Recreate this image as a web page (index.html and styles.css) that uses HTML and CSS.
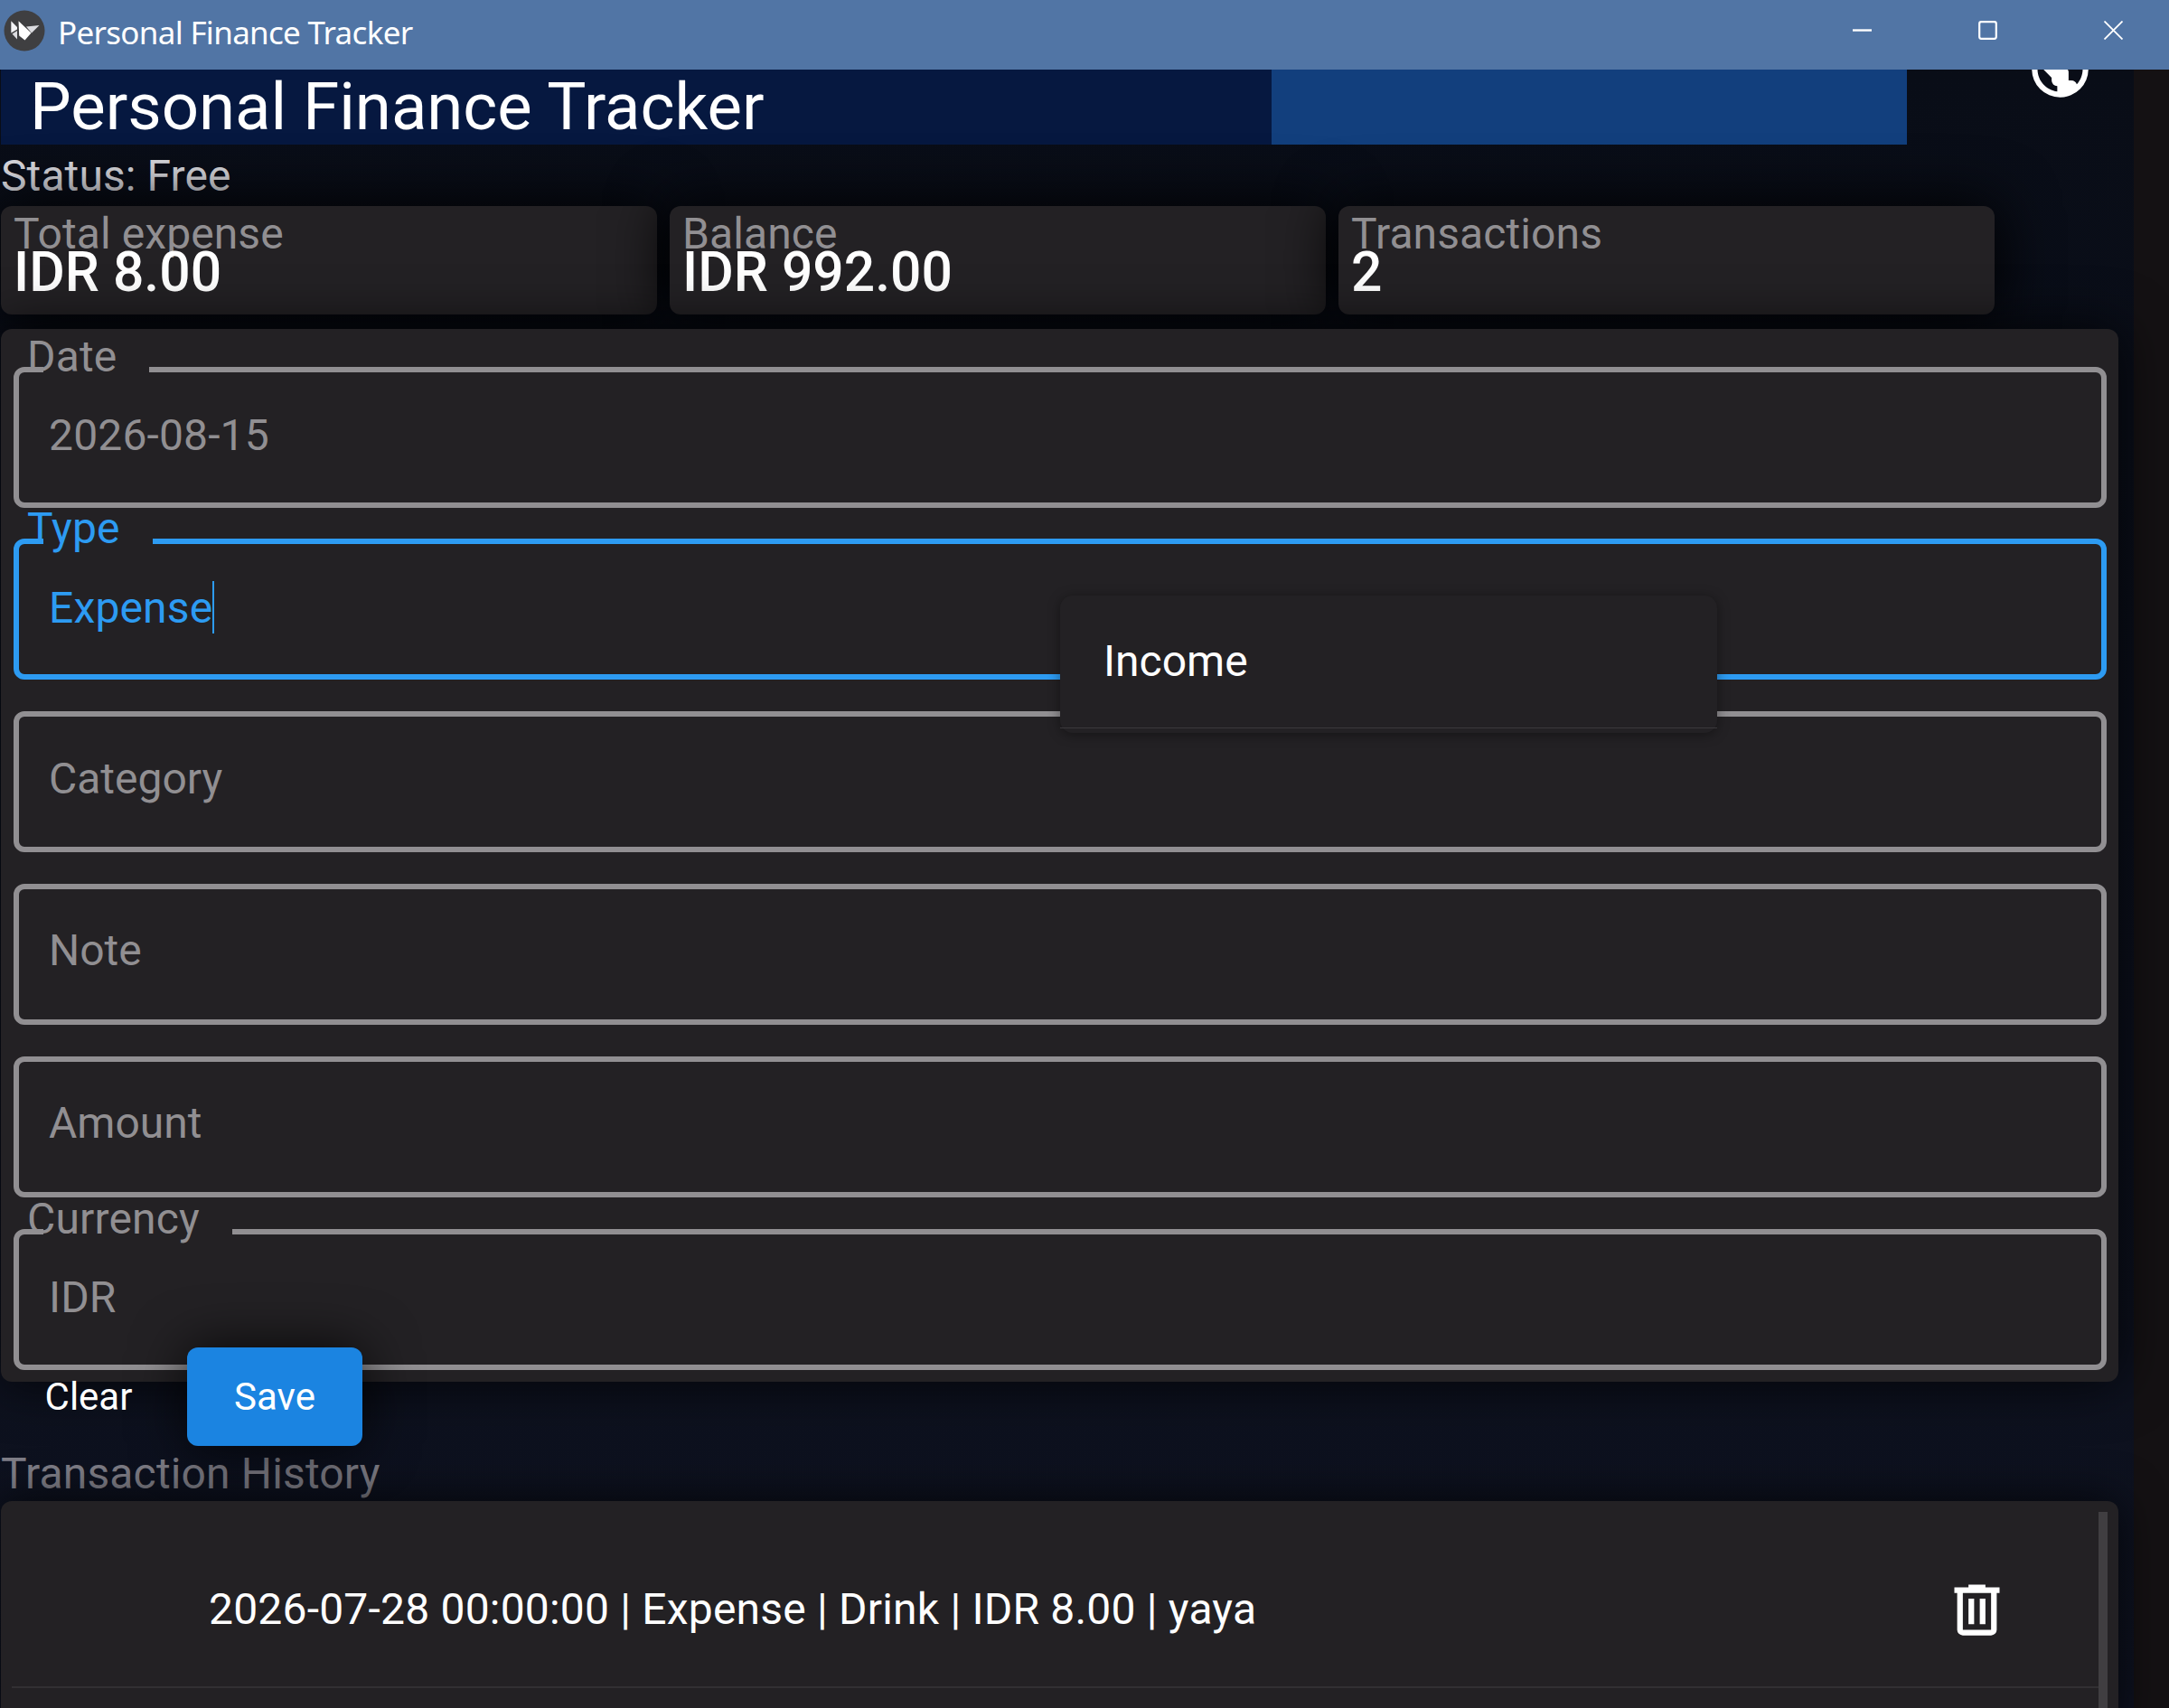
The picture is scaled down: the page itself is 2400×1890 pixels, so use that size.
FILE: index.html
```
<!DOCTYPE html>
<html lang="en">
<head>
  <meta charset="UTF-8">
  <meta name="viewport" content="width=device-width, initial-scale=1.0">
  <title>Personal Finance Tracker</title>
  <link rel="stylesheet" href="styles.css">
</head>
<body>
  <div class="titlebar">
    <svg class="logo" viewBox="0 0 46 46">
      <circle cx="23" cy="23" r="22.5" fill="#3f3f41"/>
      <path d="M8.3 12.3 L15 19 L15 21.5 L8.3 25.5 Z" fill="#f4f4f6"/>
      <path d="M9.5 26.5 L15 23 L15 32.5 Z" fill="#dcdce0"/>
      <path d="M16.5 12.3 L30.5 25.5 L23.5 33.5 L17.2 28.5 Z" fill="#fff"/>
      <path d="M25 18.5 L39.5 17 L31 25.5 Z" fill="#dcdce0"/>
    </svg>
    <span class="window-title">Personal Finance Tracker</span>
    <div class="window-buttons">
      <svg viewBox="0 0 21 21"><path d="M0 10.5H21" stroke-width="2.4"/></svg>
      <svg viewBox="0 0 21 21"><rect x="1.2" y="1.2" width="18.6" height="18.6" rx="2"/></svg>
      <svg viewBox="0 0 21 21"><path d="M0.5 0.5L20.5 20.5M20.5 0.5L0.5 20.5" stroke-width="1.8"/></svg>
    </div>
  </div>

  <div class="app">
    <div class="main">
      <div class="header">
        <h1>Personal Finance Tracker</h1>
        <div class="header-block"></div>
        <div class="header-action">
          <svg class="icon globe" viewBox="0 0 24 24"><path d="M17.9,17.39C17.64,16.59 16.89,16 16,16H15V13A1,1 0 0,0 14,12H8V10H10A1,1 0 0,0 11,9V7H13A2,2 0 0,0 15,5V4.59C17.93,5.77 20,8.64 20,12C20,14.08 19.2,15.97 17.9,17.39M11,19.93C7.05,19.44 4,16.08 4,12C4,11.38 4.08,10.78 4.21,10.21L9,15V16A2,2 0 0,0 11,18M12,2A10,10 0 0,0 2,12A10,10 0 0,0 12,22A10,10 0 0,0 22,12A10,10 0 0,0 12,2Z"/></svg>
        </div>
      </div>

      <p class="status">Status: Free</p>

      <div class="stats">
        <div class="stat"><span class="stat-label">Total expense</span><strong>IDR 8.00</strong></div>
        <div class="stat"><span class="stat-label">Balance</span><strong>IDR 992.00</strong></div>
        <div class="stat"><span class="stat-label">Transactions</span><strong>2</strong></div>
      </div>

      <div class="form">
        <div class="field filled"><label><span>Date</span></label><span class="value">2026-08-15</span></div>
        <div class="field filled focused"><label><span>Type</span></label><span class="value">Expense</span><i class="caret"></i></div>
        <div class="field"><span class="value">Category</span></div>
        <div class="field"><span class="value">Note</span></div>
        <div class="field"><span class="value">Amount</span></div>
        <div class="field filled"><label><span>Currency</span></label><span class="value">IDR</span></div>
        <div class="menu">
          <div class="menu-item">Income</div>
        </div>
      </div>

      <div class="actions">
        <button type="button" class="clear-btn">Clear</button>
        <button type="button" class="save-btn">Save</button>
      </div>

      <h2>Transaction History</h2>

      <div class="history">
        <div class="row">
          <span class="row-text">2026-07-28 00:00:00 | Expense | Drink | IDR 8.00 | yaya</span>
          <svg class="icon" viewBox="0 0 24 24"><path d="M9,3V4H4V6H5V19A2,2 0 0,0 7,21H17A2,2 0 0,0 19,19V6H20V4H15V3H9M7,6H17V19H7V6M9,8V17H11V8H9M13,8V17H15V8H13Z"/></svg>
        </div>
        <div class="scrollbar"></div>
      </div>
    </div>
  </div>
</body>
</html>
```
FILE: styles.css
```
* {
  box-sizing: border-box;
}
body {
  margin: 0;
  height: 1890px;
  overflow: hidden;
  font-family: Roboto, sans-serif;
  font-size: 48px;
  color: #fff;
  background-color: #141113;
}

/* window frame */
.titlebar {
  display: flex;
  align-items: center;
  height: 77px;
  padding-left: 4px;
  background-color: #5175a5;
}
.logo {
  width: 46px;
  height: 46px;
  margin-bottom: 10px;
}
.window-title {
  margin-left: 14px;
  margin-bottom: 7px;
  font-family: "Noto Sans", sans-serif;
  font-size: 35px;
  letter-spacing: -0.7px;
}
.window-buttons {
  display: flex;
  gap: 118px;
  margin-left: auto;
  margin-right: 51px;
  margin-bottom: 10px;
}
.window-buttons svg {
  width: 21px;
  height: 21px;
  fill: none;
  stroke: #fff;
  stroke-width: 2.2;
}

.app {
  height: 1813px;
  overflow: hidden;
}
.main {
  width: 2361px;
  height: 1813px;
  padding-left: 1px;
  background: linear-gradient(#090d17, #0e1220);
}
.header {
  display: flex;
  height: 83px;
}
h1 {
  width: 1406px;
  margin: 0;
  padding-left: 32px;
  font-size: 72.5px;
  font-weight: 400;
  line-height: 84px;
  background-color: #061840;
}
.header-block {
  width: 703px;
  background-color: #123f7d;
}
.header-action {
  flex: 1;
  display: flex;
  justify-content: center;
  padding-left: 88px;
}
.icon {
  width: 75px;
  height: 75px;
  fill: #fff;
}
.globe {
  margin-top: -38px;
}
.status {
  margin: 0;
  height: 68px;
  line-height: 70px;
  letter-spacing: 0.1px;
  color: #dcdce1;
}

/* summary cards */
.stats {
  display: flex;
  gap: 14px;
  margin-bottom: 16px;
}
.stat {
  position: relative;
  width: 726px;
  height: 120px;
  padding: 0 14px;
  border-radius: 12px;
  background-color: #232124;
  box-shadow: 0 0 64px 4px rgba(0, 0, 0, 0.95);
}
.stat-label {
  display: block;
  height: 44px;
  line-height: 61px;
  letter-spacing: 0.1px;
  color: #918f92;
}
.stat strong {
  display: block;
  font-size: 60.6px;
  font-weight: 500;
  line-height: 60px;
}

/* entry form */
.form {
  position: relative;
  display: flex;
  flex-direction: column;
  gap: 34.8px;
  width: 2343px;
  height: 1165px;
  padding: 41.6px 13px 0 14px;
  border-radius: 12px;
  background-color: #232124;
  box-shadow: 0 0 60px rgba(0, 0, 0, 0.8);
}
.field {
  position: relative;
  display: flex;
  align-items: center;
  height: 156px;
  flex: none;
  padding-left: 33px;
  padding-bottom: 8px;
  border: 6px solid #918f92;
  border-radius: 12px;
  color: #918f92;
}
.filled {
  padding-bottom: 4px;
  letter-spacing: 0.15px;
}
.field label {
  position: absolute;
  top: -6px;
  left: 27px;
  height: 6px;
  padding-right: 36px;
  background-color: #232124;
}
.field label span {
  display: block;
  margin-top: -40px;
  margin-left: -18px;
  line-height: 58px;
}
.focused {
  border-color: #2d9bf2;
  color: #2d9bf2;
}
.caret {
  width: 2px;
  height: 58px;
  background-color: #2d9bf2;
}
.menu {
  position: absolute;
  top: 295px;
  left: 1172px;
  width: 727px;
  height: 152px;
  border-radius: 14px;
  background-color: #232124;
  box-shadow: 0 2px 14px rgba(0, 0, 0, 0.4);
}
.menu-item {
  height: 147px;
  padding-left: 48px;
  line-height: 146px;
  border-bottom: 1px solid #3b393c;
}

.actions {
  position: relative;
  display: flex;
  margin-top: -38px;
  padding-left: 12px;
}
.actions button {
  height: 109px;
  border: none;
  border-radius: 12px;
  font-family: inherit;
  font-size: 42px;
  color: #fff;
}
.clear-btn {
  width: 170px;
  margin-right: 24px;
  background: none;
}
.save-btn {
  width: 194px;
  background-color: #1b84e1;
  box-shadow: 0 0 60px rgba(0, 0, 0, 0.8);
}
h2 {
  margin: 0;
  height: 61px;
  font-size: 48px;
  font-weight: 400;
  line-height: 61px;
  letter-spacing: 0.15px;
  color: #7f7e87;
}

.history {
  position: relative;
  display: flex;
  width: 2343px;
  height: 260px;
  padding: 12px;
  border-radius: 12px;
  background-color: #232124;
  box-shadow: 0 0 50px rgba(0, 0, 0, 0.75);
}
.row {
  display: flex;
  align-items: center;
  flex: 1;
  height: 195px;
  padding: 24px 97px 0 218px;
  border-bottom: 2px solid #323033;
}
.row-text {
  margin-bottom: 2px;
  letter-spacing: 0.2px;
}
.row .icon {
  margin-left: auto;
}
.scrollbar {
  width: 10px;
  height: 248px;
  background-color: #403e41;
}
```
